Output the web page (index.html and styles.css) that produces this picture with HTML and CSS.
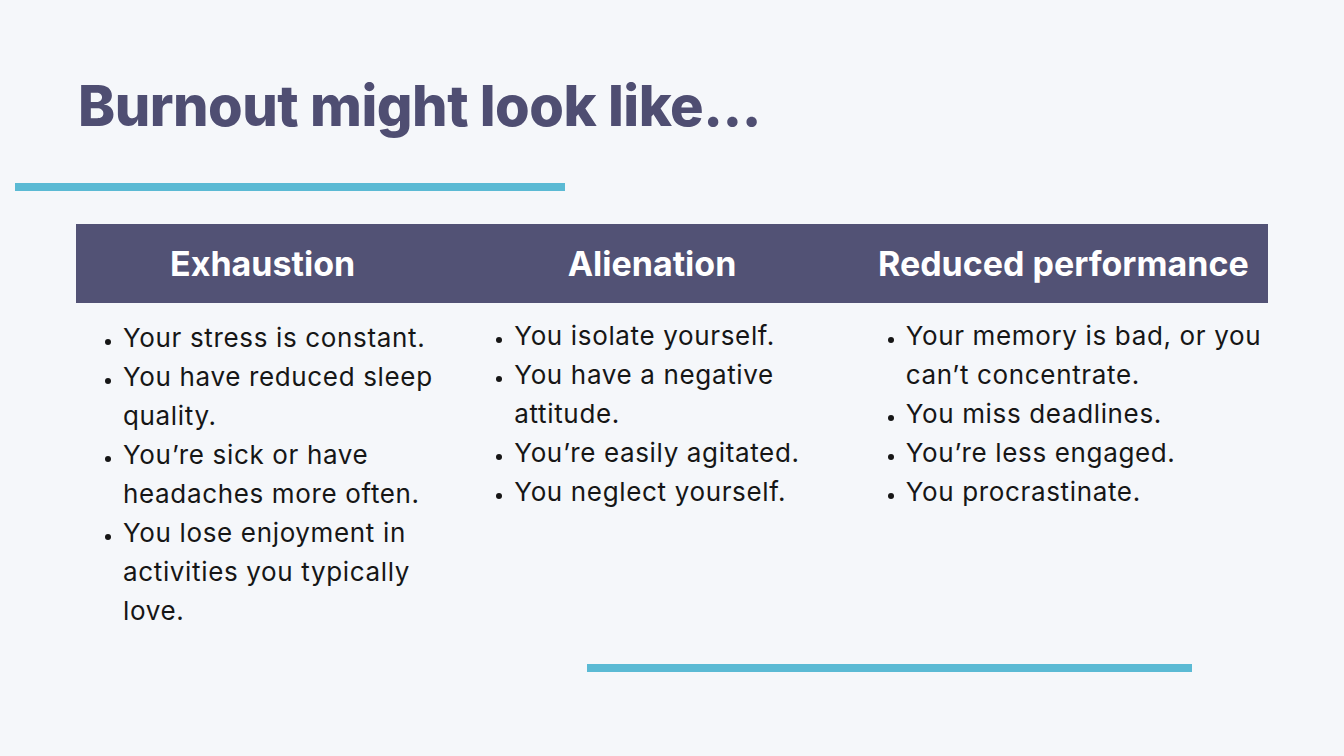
FILE: index.html
```html
<!DOCTYPE html>
<html lang="en">
<head>
<meta charset="utf-8">
<title>Burnout might look like...</title>
<link rel="stylesheet" href="styles.css">
</head>
<body>
<main class="slide">
  <h1 class="title">Burnout might look like...</h1>
  <div class="rule rule-top"></div>
  <div class="band">
    <div class="band-cell band-first">Exhaustion</div>
    <div class="band-cell band-second">Alienation</div>
    <div class="band-cell band-third">Reduced performance</div>
  </div>
  <div class="lists">
    <ul class="list list-first">
      <li>Your stress is constant.</li>
      <li>You have reduced sleep quality.</li>
      <li>You’re sick or have headaches more often.</li>
      <li>You lose enjoyment in activities you typically love.</li>
    </ul>
    <ul class="list list-second">
      <li>You isolate yourself.</li>
      <li>You have a negative attitude.</li>
      <li>You’re easily agitated.</li>
      <li>You neglect yourself.</li>
    </ul>
    <ul class="list list-third">
      <li>Your memory is bad, or you can’t concentrate.</li>
      <li>You miss deadlines.</li>
      <li>You’re less engaged.</li>
      <li>You procrastinate.</li>
    </ul>
  </div>
  <div class="rule rule-bottom"></div>
</main>
</body>
</html>
```

FILE: styles.css
```css
html, body {
  margin: 0;
  padding: 0;
}
body {
  background: #f5f7fa;
  width: 1344px;
  height: 756px;
  overflow: hidden;
  font-family: Inter, "Liberation Sans", sans-serif;
}
.slide {
  display: flex;
  flex-direction: column;
  padding-top: 78px;
}
.title {
  margin: 0 0 0 78px;
  font-size: 56px;
  line-height: 56px;
  font-weight: 800;
  letter-spacing: -0.5px;
  color: #4f4e72;
}
.rule {
  background: #5bbad4;
  height: 8px;
}
.rule-top {
  margin: 49px 0 0 15px;
  width: 550px;
}
.band {
  margin: 33px 0 0 76px;
  width: 1192px;
  height: 79px;
  background: #525275;
  display: grid;
  grid-template-columns: 1fr 1fr 1fr;
  align-items: center;
}
.band-cell {
  text-align: center;
  color: #ffffff;
  font-size: 34px;
  font-weight: 700;
}
.band-first {
  padding-right: 24px;
}
.band-second {
  padding-right: 40px;
}
.band-third {
  padding-right: 12px;
}
.lists {
  display: grid;
  grid-template-columns: 1fr 1fr 1fr;
  width: 1192px;
  margin: 13px 0 0 76px;
}
.list {
  margin: 0;
  padding: 0;
  list-style: disc outside;
  font-size: 26px;
  line-height: 39px;
  letter-spacing: 0.65px;
  color: #161616;
}
.list-first {
  padding: 2px 0 0 47px;
}
.list-second {
  padding-left: 41px;
}
.list-third {
  padding-left: 35px;
}
.list li::marker {
  font-size: 18px;
}
.rule-bottom {
  margin: 34px 0 0 587px;
  width: 605px;
}
```
